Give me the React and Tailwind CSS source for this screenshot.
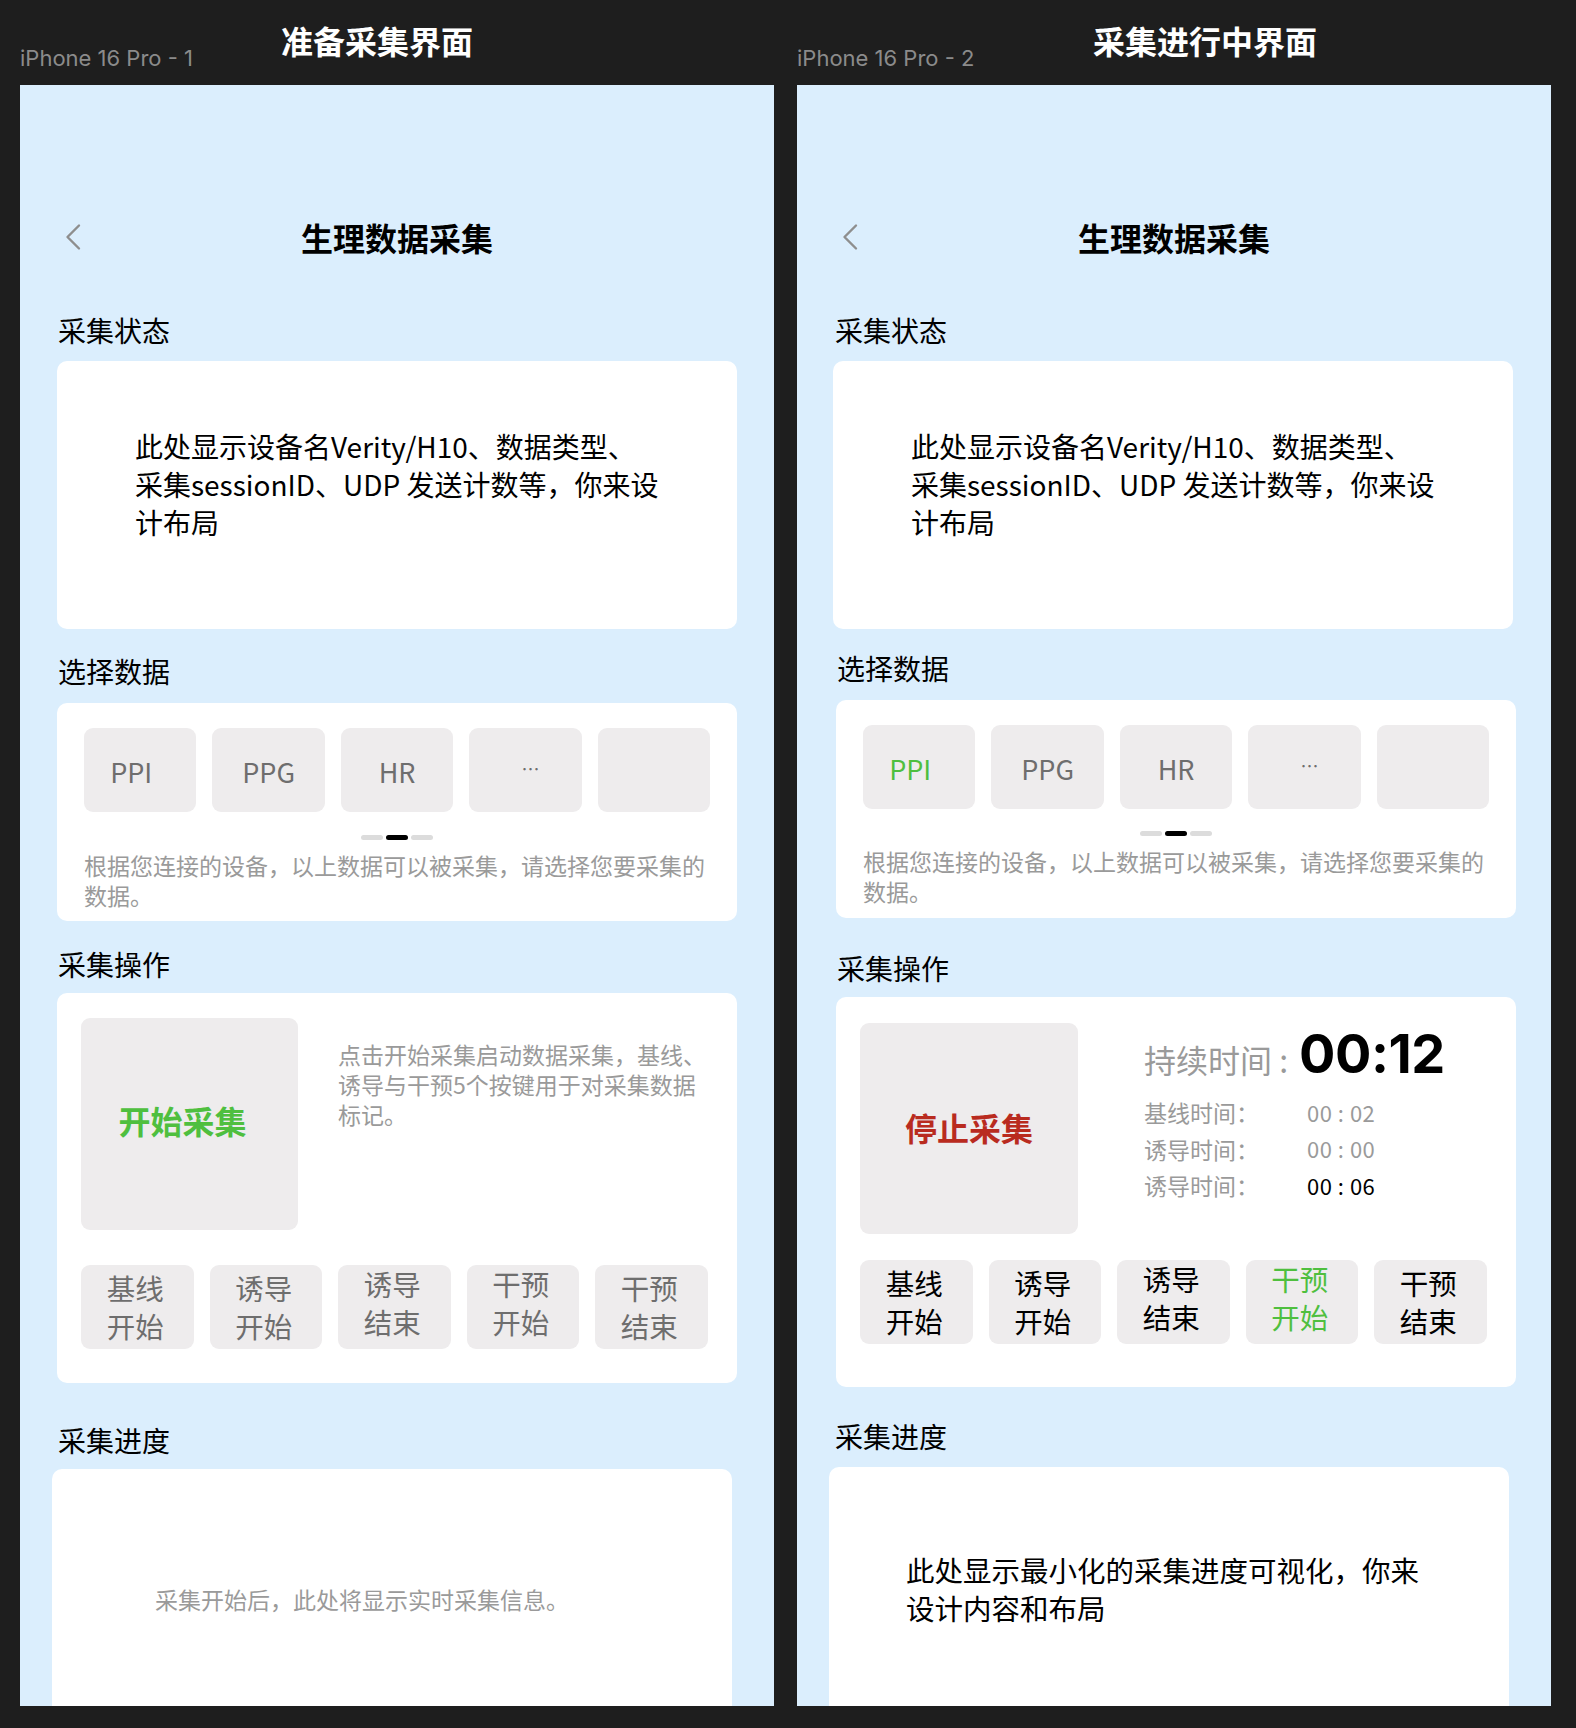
import React from 'react';

const Chevron = () => (
    <svg width="18" height="28" viewBox="0 0 18 28" fill="none">
        <path d="M15 2.5 L3.5 14 L15 25.5" stroke="#8e8e8e" strokeWidth="2.4" strokeLinecap="round" strokeLinejoin="round" />
    </svg>
);

const Label = ({ children, className = '' }) => (
    <div className={`text-[28px] leading-[36px] text-black ${className}`}>{children}</div>
);

const Dots = () => (
    <div className="flex justify-center gap-[3px]">
        <div className="w-[22px] h-[5px] rounded-full bg-[#dcdcdc]"></div>
        <div className="w-[22px] h-[5px] rounded-full bg-black"></div>
        <div className="w-[22px] h-[5px] rounded-full bg-[#dcdcdc]"></div>
    </div>
);

const Chips = ({ active }) => {
    const items = ['PPI', 'PPG', 'HR', '…', ''];
    return (
        <div className="flex gap-[16px]">
            {items.map((t, i) => {
                let pad = '';
                if (i === 0) pad = 'pr-[18px]';
                if (i === 3) pad = 'pl-[10px]';
                return (
                    <div
                        key={i}
                        className={`w-[113px] h-[84px] rounded-[9px] bg-[#eeeced] flex items-center justify-center ${pad}`}
                    >
                        <span
                            className={`${t === '…' ? 'text-[18px] pb-[4px]' : 'text-[27px] pt-[2px]'} leading-none ${
                                i === 0 && active ? 'text-[#4fbf3f]' : 'text-[#6e6e6e]'
                            }`}
                        >
                            {t}
                        </span>
                    </div>
                );
            })}
        </div>
    );
};

const MarkButtons = ({ running }) => {
    const items = [
        ['基线', '开始'],
        ['诱导', '开始'],
        ['诱导', '结束'],
        ['干预', '开始'],
        ['干预', '结束'],
    ];
    return (
        <div className="flex gap-[16px]">
            {items.map((pair, i) => {
                let color = running ? 'text-black' : 'text-[#6e6e6e]';
                if (running && i === 3) color = 'text-[#4fbf3f]';
                return (
                    <div
                        key={i}
                        className={`w-[112.5px] h-[84px] rounded-[9px] bg-[#eeeced] flex flex-col items-center justify-center pr-[4px] text-[28.5px] leading-[38px] ${color} ${
                            i === 2 || i === 3 ? 'pb-[8px]' : ''
                        }`}
                    >
                        <span>{pair[0]}</span>
                        <span>{pair[1]}</span>
                    </div>
                );
            })}
        </div>
    );
};

const StatusCard = ({ ml }) => (
    <div className={`mt-[13px] ${ml} w-[680px] h-[268px] shrink-0 rounded-[10px] bg-white pl-[78px] pt-[66px] text-[28px] leading-[38px] text-black`}>
        <div className="whitespace-nowrap">此处显示设备名Verity/H10、数据类型、</div>
        <div className="whitespace-nowrap">采集sessionID、UDP 发送计数等，你来设</div>
        <div className="whitespace-nowrap">计布局</div>
    </div>
);

const DataCard = ({ mt, ml, active, dotsMt }) => (
    <div className={`${mt} ${ml} w-[680px] h-[218px] shrink-0 rounded-[10px] bg-white pt-[25px] px-[27px]`}>
        <Chips active={active} />
        <div className={dotsMt}>
            <Dots />
        </div>
        <div className="mt-[10px] text-[23px] leading-[30px] text-[#9a9a9a]">
            <div className="whitespace-nowrap">根据您连接的设备，以上数据可以被采集，请选择您要采集的</div>
            <div>数据。</div>
        </div>
    </div>
);

const Nav = () => (
    <div className="mt-[128px] h-[48px] grid grid-cols-[1fr_auto_1fr] items-center">
        <div className="pl-[44px] flex items-center">
            <Chevron />
        </div>
        <div className="text-[32px] leading-[48px] font-bold text-black">生理数据采集</div>
        <div></div>
    </div>
);

const PhoneReady = () => (
    <div className="w-[754px] h-[1621px] bg-[#dbeefd] overflow-hidden flex flex-col">
        <Nav />
        <Label className="mt-[51px] ml-[38px]">采集状态</Label>
        <StatusCard ml="ml-[37px]" />

        <Label className="mt-[24px] ml-[38px]">选择数据</Label>
        <DataCard mt="mt-[14px]" ml="ml-[37px]" active={false} dotsMt="mt-[23px]" />

        <Label className="mt-[25px] ml-[38px]">采集操作</Label>
        <div className="mt-[11px] ml-[37px] w-[680px] h-[390px] shrink-0 rounded-[10px] bg-white pt-[25px] pl-[24px]">
            <div className="flex">
                <div className="w-[217px] h-[212px] shrink-0 rounded-[9px] bg-[#eeeced] flex items-center justify-center pr-[14px] pb-[8px]">
                    <span className="text-[32px] font-bold text-[#4fbf3f]">开始采集</span>
                </div>
                <div className="ml-[40px] mt-[21px] text-[23px] leading-[30px] text-[#9a9a9a]">
                    <div className="whitespace-nowrap">点击开始采集启动数据采集，基线、</div>
                    <div className="whitespace-nowrap">诱导与干预5个按键用于对采集数据</div>
                    <div>标记。</div>
                </div>
            </div>
            <div className="mt-[35px]">
                <MarkButtons running={false} />
            </div>
        </div>

        <Label className="mt-[39px] ml-[38px]">采集进度</Label>
        <div className="mt-[11px] ml-[32px] w-[680px] h-[420px] shrink-0 rounded-[10px] bg-white pl-[103px] pt-[115px] text-[23px] leading-[30px] text-[#9a9a9a]">
            采集开始后，此处将显示实时采集信息。
        </div>
    </div>
);

const TimeRow = ({ label, value, dark }) => (
    <div className="flex h-[36.5px] items-center">
        <span className="w-[163px] shrink-0 text-[23px] text-[#9a9a9a]">{label}</span>
        <span className={`text-[22px] tracking-[0.5px] ${dark ? 'text-black' : 'text-[#9a9a9a]'}`}>{value}</span>
    </div>
);

const PhoneRunning = () => (
    <div className="w-[754px] h-[1621px] bg-[#dbeefd] overflow-hidden flex flex-col">
        <Nav />
        <Label className="mt-[51px] ml-[38px]">采集状态</Label>
        <StatusCard ml="ml-[36px]" />

        <Label className="mt-[21px] ml-[40px]">选择数据</Label>
        <DataCard mt="mt-[14px]" ml="ml-[39px]" active={true} dotsMt="mt-[22px]" />

        <Label className="mt-[32px] ml-[40px]">采集操作</Label>
        <div className="mt-[11px] ml-[39px] w-[680px] h-[390px] shrink-0 rounded-[10px] bg-white pt-[26px] pl-[24px]">
            <div className="flex">
                <div className="w-[218px] h-[211px] shrink-0 rounded-[9px] bg-[#eeeced] flex items-center justify-center pb-[3px]">
                    <span className="text-[32px] font-bold text-[#b92b1f]">停止采集</span>
                </div>
                <div className="ml-[66px] mt-[0px] flex flex-col">
                    <div className="flex items-baseline">
                        <span className="text-[32px] text-[#9a9a9a]">持续时间 :</span>
                        <span className="ml-[11px] font-['Inter',sans-serif] font-bold text-[54px] leading-[62px] text-black tracking-[-0.5px]">
                            00:12
                        </span>
                    </div>
                    <div className="mt-[9px]">
                        <TimeRow label="基线时间：" value="00 : 02" />
                        <TimeRow label="诱导时间：" value="00 : 00" />
                        <TimeRow label="诱导时间：" value="00 : 06" dark />
                    </div>
                </div>
            </div>
            <div className="mt-[26px]">
                <MarkButtons running={true} />
            </div>
        </div>

        <Label className="mt-[31px] ml-[38px]">采集进度</Label>
        <div className="mt-[13px] ml-[32px] w-[680px] h-[420px] shrink-0 rounded-[10px] bg-white pl-[77px] pt-[84px] text-[28.5px] leading-[37.5px] text-black">
            <div className="whitespace-nowrap">此处显示最小化的采集进度可视化，你来</div>
            <div>设计内容和布局</div>
        </div>
    </div>
);

const Header = ({ name, title, labelWidth }) => (
    <div className="h-[85px] flex items-start">
        <div className={`${labelWidth} shrink-0 mt-[44px] font-['Inter',sans-serif] text-[22px] leading-[28px] text-[#8b8b8b]`}>
            {name}
        </div>
        <div className="mt-[19px] text-[32px] leading-[42px] font-bold text-white">{title}</div>
    </div>
);

export default function App() {
    return (
        <div className="w-[1576px] h-[1728px] bg-[#1e1e1e] overflow-hidden flex gap-[23px] pl-[20px] font-['Noto_Sans_CJK_SC',sans-serif]">
            <div className="w-[754px] flex flex-col">
                <Header name="iPhone 16 Pro - 1" title="准备采集界面" labelWidth="w-[261px]" />
                <PhoneReady />
            </div>
            <div className="w-[754px] flex flex-col">
                <Header name="iPhone 16 Pro - 2" title="采集进行中界面" labelWidth="w-[296px]" />
                <PhoneRunning />
            </div>
        </div>
    );
}
